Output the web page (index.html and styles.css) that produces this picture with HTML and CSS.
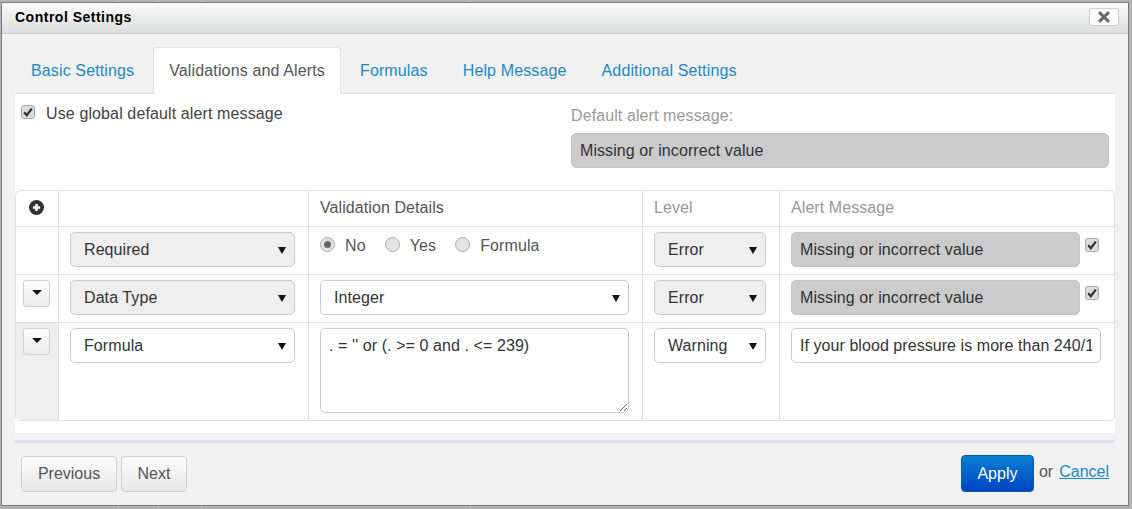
FILE: index.html
```html
<!DOCTYPE html>
<html lang="en">
<head>
<meta charset="utf-8">
<title>Control Settings</title>
<link rel="stylesheet" href="styles.css">
</head>
<body>
<div class="dialog">
  <header class="dialog-head">
    <h1 class="dialog-title">Control Settings</h1>
    <button class="close" type="button" aria-label="Close">
      <svg width="12" height="12" viewBox="0 0 12 12"><path d="M1 1.2l10 9.6M11 1.2l-10 9.6" stroke="#666" stroke-width="3" fill="none"/></svg>
    </button>
  </header>
  <div class="dialog-body">
    <nav class="tabs">
      <a class="tab" href="#">Basic Settings</a>
      <a class="tab active" href="#">Validations and Alerts</a>
      <a class="tab" href="#">Formulas</a>
      <a class="tab" href="#">Help Message</a>
      <a class="tab" href="#">Additional Settings</a>
    </nav>
    <section class="panel">
      <div class="global-row">
        <label class="global-label">
          <span class="check"><svg width="10" height="10" viewBox="0 0 10 10"><path d="M1.2 5.2l2.6 3L8.8 1.6" stroke="#333" stroke-width="2.2" fill="none"/></svg></span>
          Use global default alert message
        </label>
        <div class="default-alert">
          <div class="default-label">Default alert message:</div>
          <div class="readonly wide">Missing or incorrect value</div>
        </div>
      </div>
      <table class="rules">
        <colgroup>
          <col class="c1"><col class="c2"><col class="c3"><col class="c4"><col class="c5">
        </colgroup>
        <thead>
          <tr>
            <th class="plus-cell">
              <svg class="plus" width="15" height="15" viewBox="0 0 16 16"><circle cx="8" cy="8" r="8" fill="#333"/><path d="M8 4.2v7.6M4.2 8h7.6" stroke="#fff" stroke-width="2.6"/></svg>
            </th>
            <th></th>
            <th>Validation Details</th>
            <th class="muted">Level</th>
            <th class="muted">Alert Message</th>
          </tr>
        </thead>
        <tbody>
          <tr>
            <td></td>
            <td><div class="select disabled w225">Required</div></td>
            <td class="radios">
              <span class="radio on"></span><span class="radio-text">No</span>
              <span class="radio"></span><span class="radio-text">Yes</span>
              <span class="radio"></span><span class="radio-text">Formula</span>
            </td>
            <td><div class="select disabled w112">Error</div></td>
            <td>
              <div class="alert-cell">
                <div class="readonly narrow">Missing or incorrect value</div>
                <span class="check row-check"><svg width="10" height="10" viewBox="0 0 10 10"><path d="M1.2 5.2l2.6 3L8.8 1.6" stroke="#333" stroke-width="2.2" fill="none"/></svg></span>
              </div>
            </td>
          </tr>
          <tr>
            <td><button class="move" type="button"><span class="caret"></span></button></td>
            <td><div class="select disabled w225">Data Type</div></td>
            <td><div class="select w309">Integer</div></td>
            <td><div class="select disabled w112">Error</div></td>
            <td>
              <div class="alert-cell">
                <div class="readonly narrow">Missing or incorrect value</div>
                <span class="check row-check"><svg width="10" height="10" viewBox="0 0 10 10"><path d="M1.2 5.2l2.6 3L8.8 1.6" stroke="#333" stroke-width="2.2" fill="none"/></svg></span>
              </div>
            </td>
          </tr>
          <tr class="last">
            <td class="shaded"><button class="move" type="button"><span class="caret"></span></button></td>
            <td><div class="select w225">Formula</div></td>
            <td>
              <textarea class="formula" spellcheck="false">. = '' or (. &gt;= 0 and . &lt;= 239)</textarea>
            </td>
            <td><div class="select w112">Warning</div></td>
            <td><input class="text-input" type="text" value="If your blood pressure is more than 240/120, please contact your doctor"></td>
          </tr>
        </tbody>
      </table>
    </section>
    <div class="divider"></div>
    <footer class="foot">
      <div class="foot-left">
        <button class="btn" type="button">Previous</button>
        <button class="btn btn-next" type="button">Next</button>
      </div>
      <div class="foot-right">
        <button class="btn-primary" type="button">Apply</button>
        <span class="or">or</span>
        <a class="cancel" href="#">Cancel</a>
      </div>
    </footer>
  </div>
</div>
</body>
</html>
```

FILE: styles.css
```css
* { box-sizing: border-box; }
html, body { margin: 0; height: 509px; overflow: hidden; }
body {
  padding: 2px 3px 3px 1px;
  font-family: "Liberation Sans", Arial, sans-serif;
  font-size: 16px;
  color: #333;
  background:
    linear-gradient(#c4c4c4, #c4c4c4) 118px 0 / 1px 100% no-repeat,
    linear-gradient(#c4c4c4, #c4c4c4) 158px 0 / 1px 100% no-repeat,
    linear-gradient(#c4c4c4, #c4c4c4) 201px 0 / 1px 100% no-repeat,
    linear-gradient(#c4c4c4, #c4c4c4) 470px 0 / 1px 100% no-repeat,
    #b2b2b2;
}
.dialog {
  height: 504px;
  border: 1px solid #7c7c7c;
  display: flex;
  flex-direction: column;
  background: #f1f1f1;
}
.dialog-head {
  height: 31px;
  flex: none;
  display: flex;
  align-items: center;
  justify-content: space-between;
  padding: 0 9px 0 13px;
  background: linear-gradient(#fbfbfb, #dcdddd);
  border-bottom: 1px solid #c4c4c4;
}
.dialog-title {
  margin: 0;
  font-size: 14px;
  font-weight: bold;
  letter-spacing: 0.5px;
  color: #000;
  position: relative;
  top: -1px;
}
.close {
  width: 30px;
  height: 18px;
  padding: 0;
  background: #fff;
  border: 1px solid #ccc;
  border-radius: 2px;
  display: flex;
  align-items: center;
  justify-content: center;
  position: relative;
  top: -1px;
}
.dialog-body { flex: 1; padding: 13px 13px 0 13px; display: flex; flex-direction: column; }

.tabs {
  display: flex;
  height: 47px;
  flex: none;
  position: relative;
  z-index: 1;
}
.tab {
  padding: 14px 16px 0;
  color: #1e88c7;
  text-decoration: none;
  line-height: 19px;
  letter-spacing: 0.13px;
  margin-right: 3px;
}
.tab.active {
  background: #fff;
  color: #555;
  border: 1px solid #e2e2e2;
  border-bottom: 0;
  border-radius: 4px 4px 0 0;
  padding: 13px 15px 0;
  letter-spacing: 0.14px;
}
.panel {
  height: 340px;
  background: #fff;
  border-top: 1px solid #e2e2e2;
  flex: none;
  margin-top: -1px;
}
.global-row {
  height: 96px;
  display: flex;
  justify-content: space-between;
}
.global-label {
  display: flex;
  align-items: flex-start;
  gap: 11px;
  padding: 10px 0 0 6px;
  line-height: 19px;
  letter-spacing: 0.12px;
  color: #444;
}
.check {
  width: 14px;
  height: 14px;
  margin-top: 1px;
  flex: none;
  border: 1px solid #aaa;
  border-radius: 3px;
  background: #dcdcdc;
  display: flex;
  align-items: center;
  justify-content: center;
}
.default-alert { width: 538px; margin-right: 6px; padding-top: 12px; }
.default-label { color: #999; line-height: 19px; height: 27px; letter-spacing: 0.1px; }
.readonly {
  background: #cbcbcb;
  border: 1px solid #c4c4c4;
  border-radius: 5px;
  height: 35px;
  line-height: 33px;
  padding-left: 8px;
  color: #333;
  letter-spacing: 0.08px;
}
.wide { width: 538px; }
.narrow { width: 289px; }

.rules {
  width: 1100px;
  table-layout: fixed;
  border-collapse: separate;
  border-spacing: 0;
  border: 1px solid #e0e0e0;
  border-radius: 5px;
}
.c1 { width: 42px; }
.c2 { width: 250px; }
.c3 { width: 334px; }
.c4 { width: 137px; }
.c5 { width: 335px; }
.rules th, .rules td {
  padding: 0 0 0 11px;
  border-left: 1px solid #e0e0e0;
  border-bottom: 1px solid #e0e0e0;
  vertical-align: top;
}
.rules th:first-child, .rules td:first-child { border-left: 0; padding: 0; }
.rules th {
  height: 36px;
  font-weight: normal;
  text-align: left;
  line-height: 34px;
  color: #555;
  letter-spacing: 0.08px;
}
.rules th.muted { color: #999; }
.rules tbody td { height: 48px; padding-top: 5px; }
.rules tbody td:first-child { padding: 5px 0 0 7px; }
.rules tr.last td { height: 97px; border-bottom: 0; }
.rules td.shaded { background: #eee; }
.plus { display: block; margin: 9px 0 0 13px; }

.select {
  position: relative;
  height: 35px;
  line-height: 33px;
  padding-left: 13px;
  border: 1px solid #ccc;
  border-radius: 5px;
  background: #fff;
  color: #333;
  letter-spacing: 0.08px;
}
.select::after {
  content: "";
  position: absolute;
  right: 8px;
  top: 14px;
  border-left: 4px solid transparent;
  border-right: 4px solid transparent;
  border-top: 7px solid #111;
}
.select.disabled { background: #eee; }
.w225 { width: 225px; }
.w309 { width: 309px; }
.w112 { width: 112px; }

.rules td.radios {
  padding-top: 9px;
  line-height: 19px;
  color: #555;
  letter-spacing: 0.1px;
}
.radio {
  display: inline-block;
  width: 15px;
  height: 15px;
  border: 1px solid #aaa;
  border-radius: 50%;
  background: #e4e4e4;
  vertical-align: -1px;
  position: relative;
}
.radio.on::after {
  content: "";
  position: absolute;
  left: 3px;
  top: 3px;
  width: 7px;
  height: 7px;
  border-radius: 50%;
  background: #666;
}
.radio-text { margin: 0 14.5px 0 10px; }

.alert-cell { display: flex; align-items: flex-start; gap: 5px; }
.row-check { margin-top: 6px; }

.move {
  display: block;
  width: 27px;
  height: 27px;
  padding: 0;
  background: linear-gradient(#fff, #e9e9e9);
  border: 1px solid #d2d2d2;
  border-radius: 3px;
  text-align: center;
}
.caret {
  display: block;
  width: 0;
  margin: 0 auto 3px;
  border-left: 5px solid transparent;
  border-right: 5px solid transparent;
  border-top: 5px solid #111;
}
.formula {
  display: block;
  width: 309px;
  height: 85px;
  border: 1px solid #ccc;
  border-radius: 5px;
  padding: 7px 8px;
  font: 16px/19px "Liberation Sans", Arial, sans-serif;
  letter-spacing: 0.08px;
  color: #333;
  outline: none;
}
.text-input {
  display: block;
  width: 310px;
  height: 35px;
  border: 1px solid #ccc;
  border-radius: 5px;
  padding: 0 8px;
  font: 16px "Liberation Sans", Arial, sans-serif;
  letter-spacing: 0.06px;
  color: #333;
  outline: none;
}

.divider {
  height: 3px;
  flex: none;
  margin-top: 7px;
  background: #dfdcee;
}
.foot {
  display: flex;
  justify-content: space-between;
  padding: 13px 6px 0 6px;
}
.foot-left { display: flex; gap: 4px; }
.btn {
  height: 36px;
  width: 96px;
  padding: 0;
  background: linear-gradient(#fdfdfd, #e7e7e7);
  border: 1px solid #cfcfcf;
  border-radius: 4px;
  font: 16px "Liberation Sans", Arial, sans-serif;
  color: #555;
}
.btn-next { width: 66px; }
.foot-right { display: flex; align-items: flex-start; }
.btn-primary {
  width: 73px;
  height: 37px;
  padding: 0;
  margin-top: -1px;
  background: linear-gradient(#0680d0, #0044c4);
  border: 1px solid #0a5cb0;
  border-radius: 4px;
  font: 16px "Liberation Sans", Arial, sans-serif;
  color: #fff;
}
.or { margin-left: 5px; line-height: 19px; padding-top: 6px; color: #555; }
.cancel { margin-left: 6px; line-height: 19px; padding-top: 6px; color: #1e88c7; }
```
